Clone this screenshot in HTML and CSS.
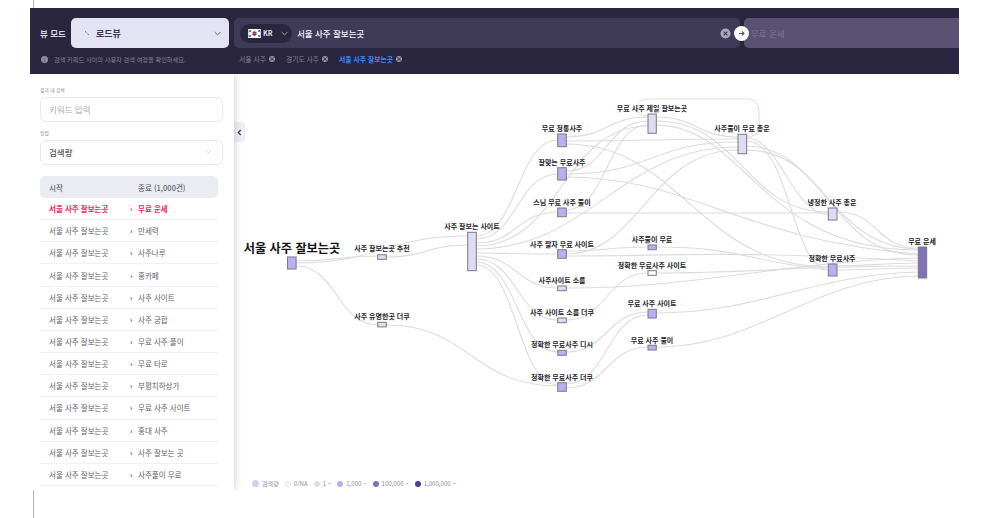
FILE: index.html
```html
<!DOCTYPE html>
<html lang="ko">
<head>
    <meta charset="UTF-8">
    <meta name="viewport" content="width=device-width, initial-scale=1.0">
    <title>로드뷰</title>
    <link rel="stylesheet" href="styles.css">
</head>
<body>
    <div class="edge-line edge-top"></div>
    <div class="app">
        <header class="topbar">
            <div class="topbar-row">
                <span class="mode-label">뷰 모드</span>
                <div class="mode-select">
                    <svg class="mode-icon" viewBox="0 0 10 10"><path d="M2 2l2 2.500M6 6l2 2.500" fill="none" stroke="#55506e" stroke-width="1.400"/></svg>
                    <span class="mode-name">로드뷰</span>
                    <svg class="chevron" viewBox="0 0 10 6"><path d="M1 1l4 4 4-4" fill="none" stroke="#5a5670" stroke-width="1.3"/></svg>
                </div>
                <div class="search-from">
                    <div class="country">
                        <svg class="flag" viewBox="0 0 14 10">
                            <rect width="14" height="10" fill="#fff"/>
                            <path d="M1 1.5l2 1.5M1 3l1.5-1.5M13 1.5l-2 1.5M13 3l-1.5-1.5M1 8.5l2-1.5M1 7l1.5 1.5M13 8.5l-2-1.5M13 7l-1.5 1.5" stroke="#222" stroke-width=".9"/>
                            <path d="M4.5 5a2.5 2.5 0 0 1 5 0z" fill="#d8232f"/>
                            <path d="M4.5 5a2.5 2.5 0 0 0 5 0z" fill="#1c4ea0"/>
                        </svg>
                        <span class="country-code">KR</span>
                        <svg class="chevron chevron-light" viewBox="0 0 10 6"><path d="M1 1l4 4 4-4" fill="none" stroke="#a9a6bd" stroke-width="1.3"/></svg>
                    </div>
                    <span class="from-text">서울 사주 잘보는곳</span>
                    <svg class="clear-btn" viewBox="0 0 12 12"><circle cx="6" cy="6" r="5.5" fill="#a9a8b4"/><path d="M4 4l4 4M8 4l-4 4" stroke="#3f3a58" stroke-width="1.3"/></svg>
                </div>
                <div class="search-to">
                    <svg class="go-btn" viewBox="0 0 15 15"><circle cx="7.5" cy="7.5" r="7.5" fill="#fff"/><path d="M5 7.500h5M8 5.500l2 2-2 2" fill="none" stroke="#5a5670" stroke-width="1.100"/></svg>
                    <span class="to-text">무료 운세</span>
                </div>
            </div>
            <div class="topbar-row topbar-sub">
                <div class="hint">
                    <span class="hint-dot">!</span>
                    <span>검색 키워드 사이의 사용자 검색 여정을 확인하세요.</span>
                </div>
                <div class="tags">
                    <span class="tag">서울 사주<i class="tag-x">×</i></span>
                    <span class="tag">경기도 사주<i class="tag-x">×</i></span>
                    <span class="tag tag-active">서울 사주 잘보는곳<i class="tag-x">×</i></span>
                </div>
            </div>
        </header>

        <div class="main">
            <aside class="sidebar">
                <label class="field-label">결과 내 검색</label>
                <div class="field field-input">키워드 입력</div>
                <label class="field-label">정렬</label>
                <div class="field field-select">
                    검색량
                    <svg class="chevron" viewBox="0 0 10 6"><path d="M1 1l4 4 4-4" fill="none" stroke="#c9c9d6" stroke-width="1"/></svg>
                </div>
                <div class="path-head">
                    <span class="col-start">시작</span>
                    <span class="col-end">종료 (1,000건)</span>
                </div>
                <ul class="path-list">
                    <li class="path-row path-active"><span class="col-start">서울 사주 잘보는곳</span><span class="arrow">›</span><span>무료 운세</span></li>
                    <li class="path-row"><span class="col-start">서울 사주 잘보는곳</span><span class="arrow">›</span><span>만세력</span></li>
                    <li class="path-row"><span class="col-start">서울 사주 잘보는곳</span><span class="arrow">›</span><span>사주나루</span></li>
                    <li class="path-row"><span class="col-start">서울 사주 잘보는곳</span><span class="arrow">›</span><span>홍카페</span></li>
                    <li class="path-row"><span class="col-start">서울 사주 잘보는곳</span><span class="arrow">›</span><span>사주 사이트</span></li>
                    <li class="path-row"><span class="col-start">서울 사주 잘보는곳</span><span class="arrow">›</span><span>사주 궁합</span></li>
                    <li class="path-row"><span class="col-start">서울 사주 잘보는곳</span><span class="arrow">›</span><span>무료 사주 풀이</span></li>
                    <li class="path-row"><span class="col-start">서울 사주 잘보는곳</span><span class="arrow">›</span><span>무료 타로</span></li>
                    <li class="path-row"><span class="col-start">서울 사주 잘보는곳</span><span class="arrow">›</span><span>부평치하상가</span></li>
                    <li class="path-row"><span class="col-start">서울 사주 잘보는곳</span><span class="arrow">›</span><span>무료 사주 사이트</span></li>
                    <li class="path-row"><span class="col-start">서울 사주 잘보는곳</span><span class="arrow">›</span><span>홍대 사주</span></li>
                    <li class="path-row"><span class="col-start">서울 사주 잘보는곳</span><span class="arrow">›</span><span>사주 잘보는 곳</span></li>
                    <li class="path-row"><span class="col-start">서울 사주 잘보는곳</span><span class="arrow">›</span><span>사주풀이 무료</span></li>
                </ul>
            </aside>

            <section class="graph">
                <div class="collapse-tab">
                    <svg viewBox="0 0 6 8"><path d="M4.5 1L1.5 4l3 3" fill="none" stroke="#3a3552" stroke-width="1.4"/></svg>
                </div>
                <svg class="flow" viewBox="234 74 725 416">
                    <g class="links">
                        <path class="loop" d="M746.7 137C755 137 759 132 759 124V112C759 103 755 99 747 99H650C641 99 637 103 637 108C637 113 641 116 648 116"/>
                        <path d="M296 261C340 261 340 256 378 256"/>
                        <path d="M296 263C380 263 385 236 468 236"/>
                        <path d="M296 266C337 266 337 325 378 325"/>
                        <path d="M386 257C427 257 427 245 468 245"/>
                        <path d="M386 325C470 325 472 386 558 386"/>
                        <path d="M476 236C517 236 517 140 558 140"/>
                        <path d="M476 239C517 239 517 174 558 174"/>
                        <path d="M476 243C517 243 517 212 558 212"/>
                        <path d="M476 246C562 246 562 126 648 126"/>
                        <path d="M476 249C590 249 620 147 738 147"/>
                        <path d="M476 253C517 253 517 254 558 254"/>
                        <path d="M476 256C517 256 517 288 558 288"/>
                        <path d="M476 259C517 259 517 320 558 320"/>
                        <path d="M476 262C517 262 517 352 558 352"/>
                        <path d="M476 265C517 265 517 385 558 385"/>
                        <path d="M566 137C607 137 607 117 648 117"/>
                        <path d="M566 141C652 141 652 139 738 139"/>
                        <path d="M566 144C680 144 700 267 828 267"/>
                        <path d="M566 171C607 171 607 121 648 121"/>
                        <path d="M566 174C652 174 652 142 738 142"/>
                        <path d="M566 177C690 177 740 240 918 254"/>
                        <path d="M566 210C607 210 607 125 648 125"/>
                        <path d="M566 213C680 213 720 213 828 213"/>
                        <path d="M566 251C600 251 615 247 648 247"/>
                        <path d="M566 254C640 254 650 150 738 150"/>
                        <path d="M566 256C680 256 720 250 918 261"/>
                        <path d="M566 288C700 288 780 262 918 258"/>
                        <path d="M566 320C607 320 607 273 648 273"/>
                        <path d="M566 352C607 352 607 312 648 312"/>
                        <path d="M566 384C607 384 607 315 648 315"/>
                        <path d="M566 388C607 388 607 347 648 347"/>
                        <path d="M656 117C697 117 697 137 738 137"/>
                        <path d="M656 121C740 121 745 212 828 212"/>
                        <path d="M656 125C745 125 760 250 918 250"/>
                        <path d="M656 273C760 273 790 266 918 266"/>
                        <path d="M656 247C740 247 750 262 828 270"/>
                        <path d="M656 313C760 313 810 275 918 272"/>
                        <path d="M656 347C760 347 810 278 918 276"/>
                        <path d="M746 138C780 138 790 210 828 215"/>
                        <path d="M746 141C790 141 790 264 828 270"/>
                        <path d="M746 146C820 146 830 248 918 249"/>
                        <path d="M746 150C830 150 830 255 918 255"/>
                        <path d="M837 212C880 212 875 248 918 248"/>
                        <path d="M837 266C870 266 880 263 918 263"/>
                        <path d="M837 270C870 270 880 268 918 268"/>
                    </g>
                    <g class="nodes">
                        <rect class="lv-2" x="287.5" y="257" width="8.6" height="12"/>
                        <rect class="lv-1" x="377.7" y="254.7" width="8.6" height="4.6"/>
                        <rect class="lv-1" x="377.7" y="322.3" width="8.6" height="4.6"/>
                        <rect class="lv-1" x="467.7" y="232.3" width="8.6" height="38.4"/>
                        <rect class="lv-2" x="557.7" y="134" width="8.6" height="12.7"/>
                        <rect class="lv-2" x="557.7" y="167.7" width="8.6" height="12.3"/>
                        <rect class="lv-2" x="557.7" y="208" width="8.6" height="8.7"/>
                        <rect class="lv-2" x="557.7" y="249.7" width="8.6" height="8.6"/>
                        <rect class="lv-1" x="557.7" y="286" width="8.6" height="4.7"/>
                        <rect class="lv-1" x="557.7" y="318" width="8.6" height="4.7"/>
                        <rect class="lv-2" x="557.7" y="350.3" width="8.6" height="5"/>
                        <rect class="lv-2" x="557.7" y="382.7" width="8.6" height="8.6"/>
                        <rect class="lv-1" x="648" y="114" width="8.3" height="19.3"/>
                        <rect class="lv-2" x="648" y="245" width="8.3" height="4.7"/>
                        <rect class="lv-0" x="648" y="270.7" width="8.3" height="4.6"/>
                        <rect class="lv-2" x="648" y="309.3" width="8.3" height="8.7"/>
                        <rect class="lv-2" x="648" y="345.3" width="8.3" height="4.7"/>
                        <rect class="lv-1" x="738" y="134.3" width="8.7" height="19.4"/>
                        <rect class="lv-1" x="828.3" y="208" width="8.7" height="12"/>
                        <rect class="lv-2" x="828.3" y="264" width="8.7" height="12"/>
                        <rect class="lv-3" x="918.3" y="247" width="8.4" height="31"/>
                    </g>
                    <g class="labels">
                        <text class="label-start" x="292" y="253">서울 사주 잘보는곳</text>
                        <text x="382" y="251">사주 잘보는곳 추천</text>
                        <text x="382" y="319">사주 유명한곳 더쿠</text>
                        <text x="472" y="228.500">사주 잘보는 사이트</text>
                        <text x="562" y="131">무료 정통사주</text>
                        <text x="562" y="164.500">잘맞는 무료사주</text>
                        <text x="562" y="204.500">스님 무료 사주 풀이</text>
                        <text x="562" y="246.500">사주 팔자 무료 사이트</text>
                        <text x="562" y="283">사주사이트 소름</text>
                        <text x="562" y="315">사주 사이트 소름 더쿠</text>
                        <text x="562" y="347">정확한 무료사주 디시</text>
                        <text x="562" y="379.500">정확한 무료사주 더쿠</text>
                        <text x="652" y="110.500">무료 사주 제일 잘보는곳</text>
                        <text x="652" y="242">사주풀이 무료</text>
                        <text x="652" y="267.500">정확한 무료사주 사이트</text>
                        <text x="652" y="306">무료 사주 사이트</text>
                        <text x="652" y="342.500">무료 사주 풀이</text>
                        <text x="742" y="131">사주풀이 무료 총운</text>
                        <text x="832" y="204.500">냉정한 사주 총운</text>
                        <text x="832" y="261">정확한 무료사주</text>
                        <text x="922" y="244">무료 운세</text>
                    </g>
                </svg>
                <div class="legend">
                    <span class="legend-item"><i class="dot dot-title"></i>검색량</span>
                    <span class="legend-item"><i class="dot dot-na"></i>0/NA</span>
                    <span class="legend-item"><i class="dot dot-1"></i>1 ~</span>
                    <span class="legend-item"><i class="dot dot-2"></i>1,000 ~</span>
                    <span class="legend-item"><i class="dot dot-3"></i>100,000 ~</span>
                    <span class="legend-item"><i class="dot dot-4"></i>1,000,000 ~</span>
                </div>
            </section>
        </div>
    </div>
    <div class="edge-line edge-bottom"></div>
</body>
</html>
```

FILE: styles.css
```css
* {
    box-sizing: border-box;
}
body {
    margin: 0;
    background-color: #ffffff;
    font-family: 'Noto Sans CJK KR', 'Noto Sans', sans-serif;
    overflow: hidden;
}
.edge-line {
    margin-left: 33px;
    border-left: 1.5px solid #b4b4b8;
}
.edge-top {
    height: 8px;
}
.edge-bottom {
    height: 28px;
}
.app {
    margin-left: 30px;
    width: 929px;
}

/* 상단 검색 바 */
.topbar {
    height: 66px;
    padding-top: 10px;
    background-color: #2b2640;
}
.topbar-row {
    display: flex;
    align-items: center;
}
.mode-label {
    width: 41px;
    padding-left: 10px;
    color: #d9d8e4;
    font-size: 8.5px;
    font-weight: 700;
    white-space: nowrap;
}
.mode-select {
    display: flex;
    align-items: center;
    width: 158px;
    height: 30px;
    padding: 0 8px 0 13px;
    background-color: #e4e3f3;
    border-radius: 5px;
}
.mode-icon {
    width: 6px;
    height: 6px;
    margin-right: 6px;
}
.mode-name {
    flex: 1;
    color: #3c3854;
    font-size: 9px;
    font-weight: 700;
}
.chevron {
    width: 7px;
    height: 5px;
}
.search-from {
    display: flex;
    align-items: center;
    width: 506px;
    height: 30px;
    margin-left: 5px;
    padding: 0 9px 0 6px;
    background-color: #3f3a58;
    border-radius: 5px;
}
.country {
    display: flex;
    align-items: center;
    width: 52px;
    height: 19px;
    padding-left: 8px;
    background-color: #2b2640;
    border-radius: 10px;
}
.flag {
    width: 13px;
    height: 9px;
}
.country-code {
    margin: 0 8px 0 2px;
    color: #e4e3f3;
    font-size: 7px;
    font-weight: 700;
}
.from-text {
    flex: 1;
    margin-left: 5px;
    color: #f4f4f8;
    font-size: 8.500px;
    font-weight: 500;
}
.clear-btn {
    width: 11px;
    height: 11px;
}
.search-to {
    display: flex;
    align-items: center;
    position: relative;
    flex: 1;
    height: 30px;
    margin-left: 4px;
    padding-left: 7px;
    background-color: #5a5272;
    border-radius: 5px 0 0 5px;
}
.go-btn {
    position: absolute;
    left: -10px;
    top: 8px;
    width: 15px;
    height: 15px;
}
.to-text {
    color: #7f7896;
    font-size: 8.500px;
}
.topbar-sub {
    margin-top: 5px;
    height: 12px;
}
.hint {
    display: flex;
    align-items: center;
    gap: 6px;
    width: 209px;
    padding-left: 11px;
    color: #85839a;
    font-size: 6.200px;
    white-space: nowrap;
}
.hint-dot {
    width: 7px;
    height: 7px;
    border-radius: 50%;
    background-color: #8f8d9f;
    color: #2b2640;
    font-size: 5px;
    line-height: 7px;
    text-align: center;
}
.tags {
    display: flex;
    gap: 11px;
}
.tag {
    display: flex;
    align-items: center;
    gap: 3px;
    color: #85839a;
    font-size: 6.800px;
    white-space: nowrap;
}
.tag-active {
    color: #3f8cf5;
    font-weight: 700;
}
.tag-x {
    width: 6px;
    height: 6px;
    border-radius: 50%;
    background-color: #9a98a8;
    color: #2b2640;
    font-size: 6px;
    font-style: normal;
    font-weight: 700;
    line-height: 6px;
    text-align: center;
}

/* 본문 */
.main {
    display: flex;
    height: 416px;
    overflow: hidden;
}
.sidebar {
    width: 204px;
    flex-shrink: 0;
    padding: 12px 11px 0 10px;
    background-color: #ffffff;
    box-shadow: 2px 0 6px rgba(60, 60, 90, 0.18);
    position: relative;
    z-index: 1;
}
.field-label {
    display: block;
    height: 11px;
    color: #8a8a96;
    font-size: 4.800px;
    line-height: 7px;
}
.field {
    display: flex;
    align-items: center;
    justify-content: space-between;
    height: 25px;
    margin-bottom: 7px;
    padding: 0 10px 2px 8px;
    border: 1px solid #e8e8f5;
    border-radius: 6px;
    font-size: 8.500px;
}
.field-input {
    color: #a9a9b2;
}
.field-select {
    color: #56565f;
    font-weight: 500;
}
.path-head {
    display: flex;
    align-items: center;
    width: 178px;
    height: 22px;
    margin-top: 11px;
    padding-left: 9px;
    background-color: #ebebf3;
    border-radius: 5px;
    color: #5f5f6c;
    font-size: 7.500px;
    font-weight: 500;
}
.col-start {
    width: 89px;
    flex-shrink: 0;
}
.col-end {
    white-space: nowrap;
}
.path-list {
    list-style: none;
    width: 178px;
    margin: 0;
    padding: 0;
}
.path-row {
    display: flex;
    align-items: center;
    height: 22.170px;
    padding-left: 9px;
    border-bottom: 1px solid #f1f1f4;
    color: #62626c;
    font-size: 7.500px;
    white-space: nowrap;
}
.path-row .col-start {
    width: 81px;
}
.arrow {
    width: 8px;
    color: #55555f;
    font-weight: 700;
}
.path-active {
    color: #f0245f;
    font-weight: 700;
}
.path-active .arrow {
    color: #f0245f;
}

/* 그래프 */
.graph {
    position: relative;
    flex: 1;
}
.flow {
    display: block;
    width: 100%;
    height: 100%;
}
.links path {
    fill: none;
    stroke: #dcdcdc;
    stroke-width: 1.100;
}
.links .loop {
    stroke: #f0d8d8;
}
.nodes rect {
    stroke: #7a7a82;
    stroke-width: 1;
}
.lv-0 {
    fill: #ffffff;
}
.lv-1 {
    fill: #dddcf2;
}
.lv-2 {
    fill: #b8b0f2;
}
.lv-3 {
    fill: #8072b8;
}
.labels text {
    fill: #26262c;
    font-size: 7px;
    font-weight: 700;
    text-anchor: middle;
}
.labels .label-start {
    fill: #111115;
    font-size: 12.200px;
}
.collapse-tab {
    position: absolute;
    left: 0;
    top: 48px;
    display: flex;
    align-items: center;
    justify-content: center;
    width: 11px;
    height: 20px;
    background-color: #eeeef3;
    border-radius: 0 3px 3px 0;
}
.collapse-tab svg {
    width: 5px;
    height: 7px;
}
.legend {
    position: absolute;
    left: 18px;
    bottom: 2px;
    display: flex;
    gap: 6px;
    color: #8e8e98;
    font-size: 6.100px;
}
.legend-item {
    display: flex;
    align-items: center;
    gap: 3px;
    white-space: nowrap;
}
.dot {
    width: 6px;
    height: 6px;
    border-radius: 50%;
}
.dot-title {
    width: 7px;
    height: 7px;
    background-color: #d3cfec;
}
.dot-na {
    background-color: #ffffff;
    border: 1px solid #e0e0ea;
}
.dot-1 {
    background-color: #dddcf2;
}
.dot-2 {
    background-color: #b8b0f2;
}
.dot-3 {
    background-color: #8072b8;
}
.dot-4 {
    background-color: #4d3d9c;
}
```
